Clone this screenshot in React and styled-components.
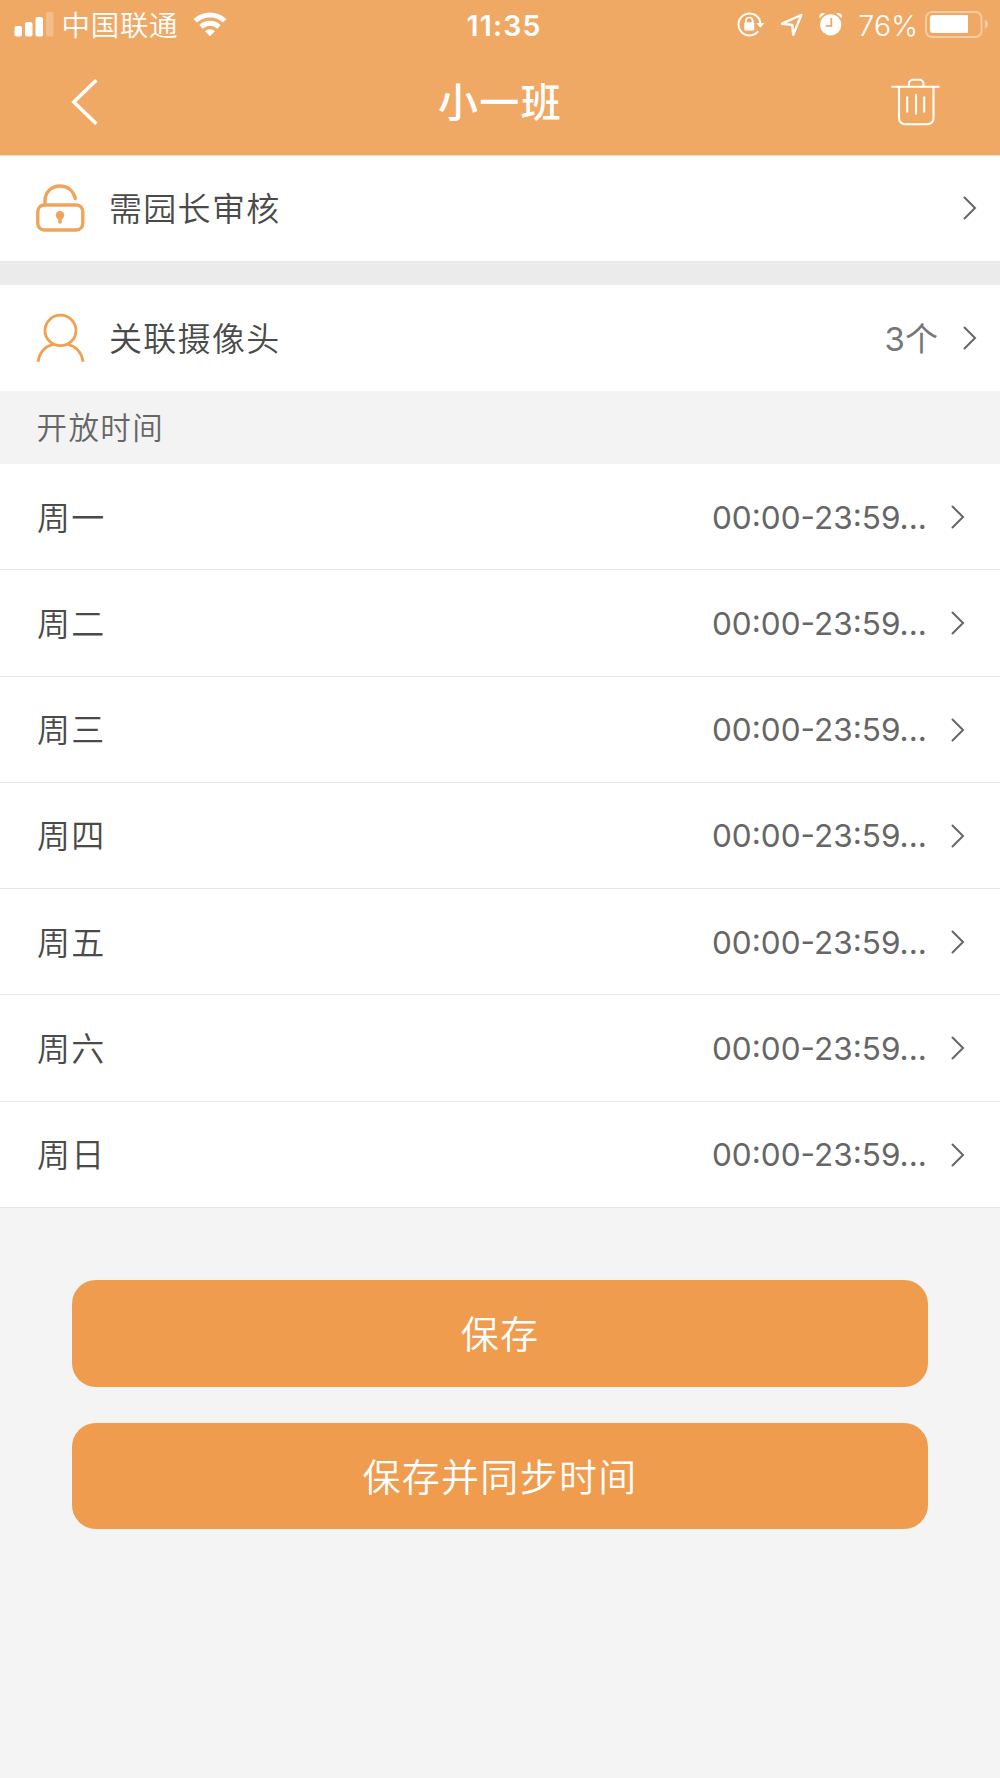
import React, { useState } from "react";
import styled, { createGlobalStyle } from "styled-components";

const GlobalStyle = createGlobalStyle`
  body {
    margin: 0;
    background: #f4f4f4;
    font-family: Inter, "Noto Sans CJK SC", sans-serif;
  }

  * {
    box-sizing: border-box;
  }
`;

const Page = styled.div`
  width: 1000px;
  min-height: 1778px;
  background: #f4f4f4;
`;

const Header = styled.header`
  height: 156px;
  background: #efa964;
  border-bottom: 1px solid #e4dcd4;
  color: #fff;
`;

const StatusBar = styled.div`
  display: grid;
  grid-template-columns: 1fr auto 1fr;
  align-items: center;
  height: 50px;
  padding: 0 11px 0 14px;
`;

const StatusGroup = styled.div`
  display: flex;
  align-items: center;
  justify-content: ${(props) => (props.$end ? "flex-end" : "flex-start")};
`;

const StatusText = styled.span`
  padding-top: 2px;
  font-size: 28.5px;
  line-height: 48px;
  font-weight: 350;
`;

const Carrier = styled(StatusText)`
  margin: 0 15px 0 7.5px;
  letter-spacing: 0.7px;
`;

const Clock = styled(StatusText)`
  padding-left: 5px;
  font-weight: 560;
  letter-spacing: 1.2px;
`;

const Battery = styled(StatusText)`
  margin: 0 7px 0 15px;
  letter-spacing: 0.1px;
`;

const Spacer = styled.span`
  width: ${(props) => props.$width}px;
`;

const NavBar = styled.div`
  display: grid;
  grid-template-columns: 60px 1fr 60px;
  align-items: center;
  height: 105px;
  padding: 0 54px;
`;

const IconButton = styled.button`
  display: flex;
  align-items: center;
  justify-content: center;
  width: 60px;
  height: 105px;
  padding: 0 0 2px;
  border: 0;
  background: none;
  color: inherit;
`;

const Title = styled.h1`
  margin: 0;
  font-size: 40px;
  line-height: 105px;
  font-weight: 500;
  letter-spacing: 1.3px;
  text-align: center;
`;

const Row = styled.div`
  display: flex;
  align-items: center;
  height: ${(props) => props.$height || 106}px;
  padding: ${(props) => props.$top || 0}px 23px 0 36px;
  background: #fff;
`;

const RowIcon = styled.svg`
  flex: none;
  margin: 0 23px 2px 0;
`;

const Label = styled.span`
  flex: 1;
  color: #4a4a4a;
  font-size: 33px;
  line-height: 48px;
  font-weight: 350;
  letter-spacing: 1.3px;
`;

const Count = styled.span`
  color: #777;
  font-size: 33px;
  line-height: 48px;
  font-weight: 370;
  margin-right: 25px;
`;

const ArrowIcon = styled.svg`
  flex: none;
  margin-bottom: 1px;
`;

const Gap = styled.div`
  height: 24px;
  background: #ebebeb;
`;

const SectionTitle = styled.h2`
  margin: 0;
  height: 73px;
  padding: 0 0 0 36.5px;
  background: #f3f3f3;
  color: #666;
  font-size: 30.5px;
  line-height: 73px;
  font-weight: 350;
  letter-spacing: 1.4px;
`;

const DayRow = styled(Row)`
  height: 106.28px;
  padding: 2px 35px 0 37px;
  border-bottom: 1px solid #e6e6e6;
`;

const Hours = styled.span`
  width: 217px;
  margin-right: 22px;
  color: #666;
  font-size: 31.5px;
  line-height: 48px;
  font-weight: 370;
  white-space: nowrap;
`;

const Actions = styled.div`
  display: flex;
  flex-direction: column;
  gap: 36px;
  padding: 72.5px 72.4px 0;
`;

const Button = styled.button`
  height: 106.5px;
  padding: 0 0 4px;
  border: 0;
  border-radius: 24px;
  background: #ef9c4e;
  color: #fff;
  font-family: inherit;
  font-size: 38px;
  font-weight: 350;
  letter-spacing: 1.3px;
`;

const Arrow = () => (
  <ArrowIcon width="14" height="24" viewBox="0 0 14 24" fill="none" stroke="#666" strokeWidth="2">
    <path d="M1.5 1.5 12 12 1.5 22.5" strokeLinecap="round" />
  </ArrowIcon>
);

const SignalIcon = () => (
  <svg width="40" height="50" viewBox="14 0 40 50" fill="#fff">
    <rect x="14.5" y="26" width="7.5" height="10.5" rx="2" />
    <rect x="25" y="22" width="7.5" height="14.5" rx="2" />
    <rect x="35.5" y="17" width="7.5" height="19.5" rx="2" />
    <rect x="46" y="12" width="7.5" height="24.5" rx="2" opacity="0.25" />
  </svg>
);

const WifiIcon = () => (
  <svg width="34" height="50" viewBox="193 0 34 50" fill="none" stroke="#fff" strokeWidth="5">
    <path d="M195.2 20.8a21.5 21.5 0 0 1 29.6 0" />
    <path d="M201 26.8a13.2 13.2 0 0 1 18 0" />
    <path d="M210 36.3l-5-5.1a7.4 7.4 0 0 1 10 0z" fill="#fff" stroke="none" />
  </svg>
);

const RotationLockIcon = () => (
  <svg width="28" height="50" viewBox="738 0 28 50" fill="none" stroke="#fff" strokeWidth="2">
    <path d="M759.2 31.2A11 11 0 1 1 761.4 23" />
    <path d="M757.2 23h8.3l-4.2 4.8z" fill="#fff" stroke="none" />
    <rect x="745.3" y="22.2" width="10" height="8.4" rx="1" fill="#fff" stroke="none" />
    <path d="M747 23v-2.2a3.3 3.3 0 0 1 6.6 0V23" strokeWidth="1.7" />
  </svg>
);

const LocationIcon = () => (
  <svg width="24" height="50" viewBox="781 0 24 50" fill="none" stroke="#fff" strokeWidth="2.4">
    <path d="M802.3 15 783 23.7l10.3 1.2.9 10z" strokeLinejoin="round" />
  </svg>
);

const AlarmIcon = () => (
  <svg width="24" height="50" viewBox="820 0 24 50" fill="#fff">
    <circle cx="831.7" cy="24.8" r="10.6" />
    <path d="M820.6 18.2c-1.5-3.2 1.8-6.2 5.3-4.8zM842.7 18.2c1.5-3.2-1.8-6.2-5.3-4.8z" />
    <path d="M832.3 18v7.8h-5.5" fill="none" stroke="#efa964" strokeWidth="1.8" />
  </svg>
);

const BatteryIcon = () => (
  <svg width="64" height="50" viewBox="925 0 64 50" fill="#fff">
    <rect x="926" y="12" width="55.5" height="25" rx="6" fill="none" stroke="#fff" strokeWidth="2" opacity="0.4" />
    <path d="M933 15h35v18h-35a3 3 0 0 1-3-3V18a3 3 0 0 1 3-3z" />
    <path d="M984.8 19.5q3.2 1.8 3.2 4.8t-3.2 4.8z" opacity="0.4" />
  </svg>
);

const BackIcon = () => (
  <svg width="28" height="46" viewBox="0 0 28 46" fill="none" stroke="#fff" strokeWidth="3.6">
    <path d="M26.3 1.3 3.8 23l22.5 21.7" />
  </svg>
);

const TrashIcon = () => (
  <svg width="50" height="48" viewBox="0 0 50 48" fill="none" stroke="#fff" strokeWidth="2.1">
    <path d="M.5 8.8h48M8 8.8V40.300a6 6 0 0 0 6 6h22.500a6 6 0 0 0 6-6V8.800" />
    <path d="M18 8V5.800a4 4 0 0 1 4-4h6.500a4 4 0 0 1 4 4V8" />
    <path d="M16.200 19.300v14.500M25 16.800v19M33.200 19.300v14.500" strokeLinecap="round" />
  </svg>
);

const LockIcon = () => (
  <RowIcon width="50" height="50" viewBox="0 0 50 50" fill="none" stroke="#f0a45b" strokeWidth="3.4">
    <rect x="1.8" y="22" width="45" height="25" rx="6.5" />
    <path d="M9 21.5V18C9 9 15.5 3 24 3c7.5 0 13.3 4.7 15.3 12.5" strokeLinecap="round" />
    <circle cx="24" cy="32.3" r="4.2" fill="#f0a45b" stroke="none" />
    <path d="M24 34v5" strokeLinecap="round" strokeWidth="3.6" />
  </RowIcon>
);

const PersonIcon = () => (
  <RowIcon width="50" height="50" viewBox="0 0 50 50" fill="none" stroke="#f0a04f" strokeWidth="2.8">
    <ellipse cx="24.5" cy="17.4" rx="15.5" ry="15.2" />
    <path d="M2 48.8C3.5 39.8 9 33.3 17 31.5M32 31.5c8 1.8 13.5 8.3 15.2 17.3" />
  </RowIcon>
);

const days = ["周一", "周二", "周三", "周四", "周五", "周六", "周日"];

function ClassSettings() {
  const [hours] = useState(days.map((day) => ({ day, time: "00:00-23:59..." })));

  return (
    <Page>
      <GlobalStyle />
      <Header>
        <StatusBar>
          <StatusGroup>
            <SignalIcon />
            <Carrier>中国联通</Carrier>
            <WifiIcon />
          </StatusGroup>
          <Clock>11:35</Clock>
          <StatusGroup $end>
            <RotationLockIcon />
            <Spacer $width={15} />
            <LocationIcon />
            <Spacer $width={15} />
            <AlarmIcon />
            <Battery>76%</Battery>
            <BatteryIcon />
          </StatusGroup>
        </StatusBar>
        <NavBar>
          <IconButton aria-label="返回">
            <BackIcon />
          </IconButton>
          <Title>小一班</Title>
          <IconButton aria-label="删除">
            <TrashIcon />
          </IconButton>
        </NavBar>
      </Header>

      <Row $height={105}>
        <LockIcon />
        <Label>需园长审核</Label>
        <Arrow />
      </Row>
      <Gap />
      <Row $top={1}>
        <PersonIcon />
        <Label>关联摄像头</Label>
        <Count>3个</Count>
        <Arrow />
      </Row>

      <SectionTitle>开放时间</SectionTitle>
      {hours.map((item) => (
        <DayRow key={item.day}>
          <Label>{item.day}</Label>
          <Hours>{item.time}</Hours>
          <Arrow />
        </DayRow>
      ))}

      <Actions>
        <Button>保存</Button>
        <Button>保存并同步时间</Button>
      </Actions>
    </Page>
  );
}

export default ClassSettings;
